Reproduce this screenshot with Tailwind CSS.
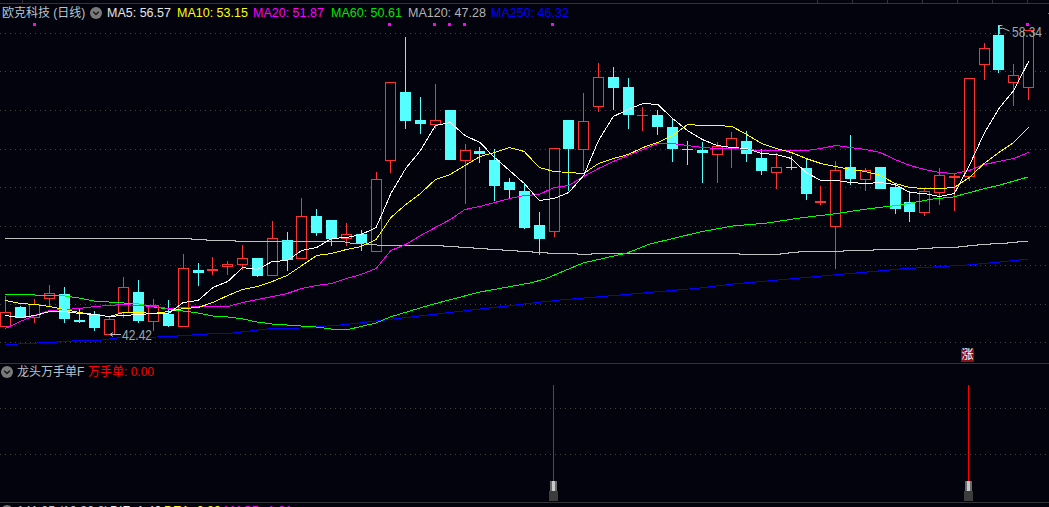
<!DOCTYPE html>
<html lang="en">

<head>
    <meta charset="UTF-8">
    <title>欧克科技 (日线)</title>
    <script src="https://cdn.jsdelivr.net/npm/@tailwindcss/browser@4"></script>
</head>

<body class="bg-[#02030c]">

    <div class="flex flex-col w-[1049px] h-[507px] overflow-hidden bg-[#02030c] font-['Liberation_Sans','Noto_Sans_CJK_SC',sans-serif] text-[12.5px] leading-[14px]">

        <!-- top strip with the scale ticks -->
        <div class="flex h-[4px] shrink-0 border-b border-[#333338] pl-[22px]">
            <i class="w-px bg-[#333338]"></i>
            <div class="flex gap-[34px] ml-[794px]">
                <i class="w-px bg-[#333338]"></i>
                <i class="w-px bg-[#333338]"></i>
                <i class="w-px bg-[#333338]"></i>
                <i class="w-px bg-[#333338]"></i>
                <i class="w-px bg-[#333338]"></i>
                <i class="w-px bg-[#333338]"></i>
                <i class="w-px bg-[#333338]"></i>
            </div>
        </div>

        <!-- main pane -->
        <div class="relative h-[359px] shrink-0">
            <svg id="kline" class="absolute inset-0" width="1049" height="359" viewBox="0 4 1049 359"></svg>

            <div class="absolute left-[2px] top-[2px] flex items-center whitespace-nowrap">
                <span class="text-[#b8c4cc] text-[12px] w-[88px]">欧克科技 (日线)</span>
                <svg width="12" height="12" viewBox="0 0 12 12" class="mr-[5px]">
                    <circle cx="6" cy="6" r="6" fill="#7a7a7a" />
                    <path d="M3.2 4.8 6 7.5l2.8-2.7" fill="none" stroke="#1b1b1b" stroke-width="1.5" />
                </svg>
                <span class="text-[#e6e6e6] w-[70px]">MA5: 56.57</span>
                <span class="text-[#ffff00] w-[76px]">MA10: 53.15</span>
                <span class="text-[#ff00ff] w-[78px]">MA20: 51.87</span>
                <span class="text-[#00e600] w-[77px]">MA60: 50.61</span>
                <span class="text-[#b4b4b4] w-[83px]">MA120: 47.28</span>
                <span class="text-[#0000ff]">MA250: 46.32</span>
            </div>

            <span class="absolute left-[1012px] top-[21px] text-[#9aa7b0] text-[12px] scale-y-[1.15]">58.34</span>
            <span class="absolute left-[122px] top-[324px] text-[#9aa7b0] text-[12px] scale-y-[1.15]">42.42</span>
            <span class="absolute left-[961px] top-[345px] w-[13px] h-[13px] bg-[#8a0f16] text-white text-[12px] leading-[13px] text-center">涨</span>
        </div>

        <!-- sub pane -->
        <div class="relative h-[139px] shrink-0 border-t border-[#333338]">
            <svg id="sub" class="absolute inset-0" width="1049" height="138" viewBox="0 364 1049 138"></svg>
            <div class="absolute left-[1px] top-[1px] flex items-center whitespace-nowrap text-[12px]">
                <svg width="12" height="12" viewBox="0 0 12 12" class="mr-[4px]">
                    <circle cx="6" cy="6" r="6" fill="#7a7a7a" />
                    <path d="M3.2 4.8 6 7.5l2.8-2.7" fill="none" stroke="#1b1b1b" stroke-width="1.5" />
                </svg>
                <span class="text-[#b8c4cc] w-[71px]">龙头万手单F</span>
                <span class="text-[#ff0000]">万手单: 0.00</span>
            </div>
        </div>

        <!-- clipped bottom legend -->
        <div class="relative h-[5px] shrink-0 overflow-hidden border-t border-[#333338]">
            <div class="absolute left-[1px] top-[1px] flex items-center whitespace-nowrap">
                <svg width="12" height="12" viewBox="0 0 12 12" class="mr-[4px]">
                    <circle cx="6" cy="6" r="6" fill="#7a7a7a" />
                </svg>
                <span class="text-[#b8c4cc] w-[93px]">141.25 (10.30.2)</span>
                <span class="text-[#e6e6e6] w-[54px]">DIF: 1.40</span>
                <span class="text-[#ffff00] w-[60px]">DEA: 0.89</span>
                <span class="text-[#ff00ff]">MACD: 1.01</span>
            </div>
        </div>
    </div>

    <script>
        const RED = "#ff3232", CYAN = "#54ffff"

        // type, high, body top, body bottom, low
        const candles = [
            ["r", 296, 312, 327, 327], ["c", 306, 307, 318, 318], ["r", 299, 304, 318, 323], ["r", 285, 293, 299, 306],
            ["c", 287, 294, 319, 323], ["c", 309, 320, 322, 323], ["c", 311, 314, 328, 331], ["r", 316, 319, 335, 335],
            ["r", 277, 287, 313, 318], ["c", 280, 292, 321, 323], ["r", 299, 305, 322, 331], ["c", 300, 314, 326, 327],
            ["r", 254, 268, 327, 327], ["c", 263, 270, 273, 286], ["r", 257, 269, 271, 275], ["r", 261, 264, 267, 275],
            ["r", 245, 258, 265, 270], ["c", 258, 258, 276, 277], ["r", 221, 238, 276, 276], ["c", 232, 240, 260, 271],
            ["r", 198, 216, 259, 259], ["c", 209, 216, 233, 236], ["c", 220, 220, 239, 246], ["r", 223, 234, 239, 246],
            ["c", 230, 234, 243, 251], ["r", 172, 179, 252, 252], ["r", 82, 82, 161, 173], ["c", 37, 92, 121, 129],
            ["c", 97, 120, 124, 134], ["r", 84, 120, 125, 129], ["c", 110, 110, 160, 160], ["r", 144, 150, 161, 204],
            ["c", 147, 151, 154, 163], ["c", 149, 160, 186, 201], ["c", 178, 182, 190, 199], ["c", 184, 191, 228, 229],
            ["c", 212, 225, 239, 255], ["r", 148, 148, 232, 237], ["c", 120, 120, 149, 191], ["r", 93, 121, 150, 171],
            ["r", 63, 77, 107, 112], ["c", 67, 77, 88, 110], ["c", 78, 87, 115, 129], ["r", 107, 115, 116, 131],
            ["c", 110, 115, 127, 135], ["c", 118, 127, 149, 162], ["c", 141, 149, 150, 165], ["c", 142, 150, 153, 183],
            ["r", 142, 146, 155, 183], ["r", 132, 138, 149, 168], ["c", 131, 141, 154, 162], ["c", 149, 158, 171, 175],
            ["r", 153, 167, 173, 189], ["c", 156, 167, 168, 170], ["c", 159, 168, 194, 200], ["r", 186, 201, 203, 205],
            ["r", 161, 170, 227, 269], ["c", 135, 167, 179, 185], ["r", 168, 170, 180, 191], ["c", 167, 167, 189, 189],
            ["c", 183, 187, 209, 214], ["c", 191, 202, 212, 222], ["r", 188, 191, 213, 216], ["r", 168, 175, 193, 205],
            ["r", 173, 176, 178, 211], ["r", 78, 78, 177, 181], ["r", 43, 48, 65, 80], ["c", 25, 35, 70, 73],
            ["r", 64, 75, 83, 106], ["r", 30, 30, 88, 100],
        ]

        const ma5 = [315, 317, 315, 311, 311, 313, 314, 316, 315, 314, 313, 313, 302, 300, 287, 281, 267, 269, 261, 260, 250, 247, 238, 237, 234, 227, 193, 168, 150, 125, 122, 135, 142, 157, 170, 183, 200, 198, 192, 175, 140, 116, 109, 103, 104, 118, 130, 139, 145, 147, 148, 153, 154, 158, 172, 180, 180, 182, 183, 182, 184, 192, 193, 196, 193, 165, 133, 108, 90, 61]
        const ma10 = [300, 303, 304, 306, 309, 312, 314, 316, 312, 312, 313, 311, 308, 307, 302, 295, 289, 286, 281, 275, 265, 255, 253, 249, 246, 239, 217, 204, 193, 179, 174, 165, 156, 152, 147, 151, 167, 171, 172, 173, 163, 158, 154, 147, 142, 135, 124, 125, 125, 126, 134, 143, 148, 152, 158, 163, 166, 169, 171, 175, 183, 187, 188, 188, 187, 177, 163, 152, 142, 127]
        const ma20 = [328, 321, 315, 310, 309, 308, 306, 305, 304, 305, 306, 308, 307, 306, 306, 306, 302, 299, 296, 293, 288, 285, 283, 278, 274, 268, 250, 244, 235, 227, 219, 209, 206, 202, 198, 195, 194, 187, 185, 176, 168, 161, 155, 149, 143, 143, 145, 147, 148, 148, 149, 150, 150, 150, 150, 148, 145, 147, 149, 152, 159, 165, 169, 172, 173, 170, 164, 161, 158, 152]

        const ma60 = "5,294 20,294 35,295 50,295 65,296 79,298 94,301 109,302 124,303 139,304 154,307 168,309 183,311 198,313 213,316 228,317 243,319 257,322 272,324 287,325 301,326 316,327 331,329 346,330 376,323 390,317 430,305 480,292 530,283 545,279 583,263 627,253 650,244 700,232 733,226 767,223 800,218 833,214 867,209 900,205 933,199 953,197 983,189 1000,185 1028,177"
        const ma120 = "5,238 191,238 191,239 206,239 206,240 235,240 235,241 340,241 350,243 377,245 443,245 443,246 458,246 458,247 473,247 473,248 487,248 487,249 502,249 502,250 517,250 517,251 532,251 532,252 547,252 547,253 577,253 577,254 591,254 591,253 739,253 739,254 780,254 780,253 788,253 788,252 798,252 798,251 843,251 843,250 873,250 873,249 917,249 917,248 932,248 932,247 958,247 958,246 967,246 967,245 977,245 977,244 990,244 990,243 1007,243 1007,242 1017,242 1017,241 1028,241"
        const ma250 = "5,345 18,344 57,342 72,341 102,340 117,338 157,337 177,336 207,334 233,333 267,329 300,328 340,325 350,324 480,309 560,300 620,295 700,288 733,284 767,281 800,278 833,275 867,272 900,269 933,267 967,265 1000,262 1028,259"

        const x_at = (i) => 5.3 + 14.83 * i
        const to_points = (arr) => arr.map((y, i) => `${x_at(i).toFixed(1)},${y + .5}`).join(" ")

        function dotted(y) {
            return `<line x1="0" y1="${y + .5}" x2="1049" y2="${y + .5}" stroke="#45453f" stroke-dasharray="1 4" />`
        }

        function line(points, color) {
            return `<polyline points="${points}" fill="none" stroke="${color}" stroke-width="1" shape-rendering="crispEdges" />`
        }

        let main = ""
        for (const y of [33, 71, 110, 149, 187, 226, 265, 304, 342]) main += dotted(y)

        for (const x of [34, 389, 434, 449, 464, 552, 1027]) {
            main += `<rect x="${x - 1}" y="23" width="3" height="3" fill="#ff00ff" />`
        }

        candles.forEach(([t, high, top, bottom, low], i) => {
            const x = Math.floor(x_at(i))
            const color = t == "r" ? RED : CYAN
            main += `<g shape-rendering="crispEdges">`
            main += `<rect x="${x}" y="${high}" width="1" height="${top - high}" fill="${color}" />`
            main += `<rect x="${x}" y="${bottom}" width="1" height="${low - bottom}" fill="${color}" />`
            if (bottom - top <= 2) {
                main += `<rect x="${x - 5}" y="${top}" width="11" height="${Math.max(bottom - top, 1)}" fill="${color}" />`
            } else if (t == "r") {
                main += `<rect x="${x - 4.5}" y="${top + .5}" width="10" height="${bottom - top - 1}" fill="#02030c" stroke="${color}" />`
            } else {
                main += `<rect x="${x - 5}" y="${top}" width="11" height="${bottom - top}" fill="${color}" />`
            }
            main += `</g>`
        })

        main += line(ma120, "#c0c0c0")
        main += line(ma250, "#0000ff")
        main += line(ma60, "#00ff00")
        main += line(to_points(ma20), "#ff00ff")
        main += line(to_points(ma10), "#ffff00")
        main += line(to_points(ma5), "#ffffff")

        // high / low arrows
        main += `<path d="M999.5 25v9M999.5 25.5h3M999.5 28.5h3M1002.5 28l7 3" stroke="#b0b0b0" fill="none" />`
        main += `<path d="M110 334.5h11M110 334.5l3-2M110 334.5l3 2" stroke="#c0c0c0" fill="none" />`
        main += `<rect x="1048" y="13" width="1" height="1" fill="#777" />`

        document.getElementById("kline").innerHTML = main

        let sub = dotted(408) + dotted(454)
        for (const x of [553, 968]) {
            sub += `<g shape-rendering="crispEdges">
                <rect x="${x}" y="385" width="1" height="96" fill="#ff0000" />
                <rect x="${x - 3}" y="481" width="2" height="10" fill="#6a6a6a" />
                <rect x="${x - 1}" y="481" width="3" height="10" fill="#c8c8c8" />
                <rect x="${x + 2}" y="481" width="2" height="10" fill="#6a6a6a" />
                <rect x="${x - 4}" y="491" width="9" height="10" fill="#3c3c3c" />
            </g>`
        }
        document.getElementById("sub").innerHTML = sub
    </script>

</body>

</html>
